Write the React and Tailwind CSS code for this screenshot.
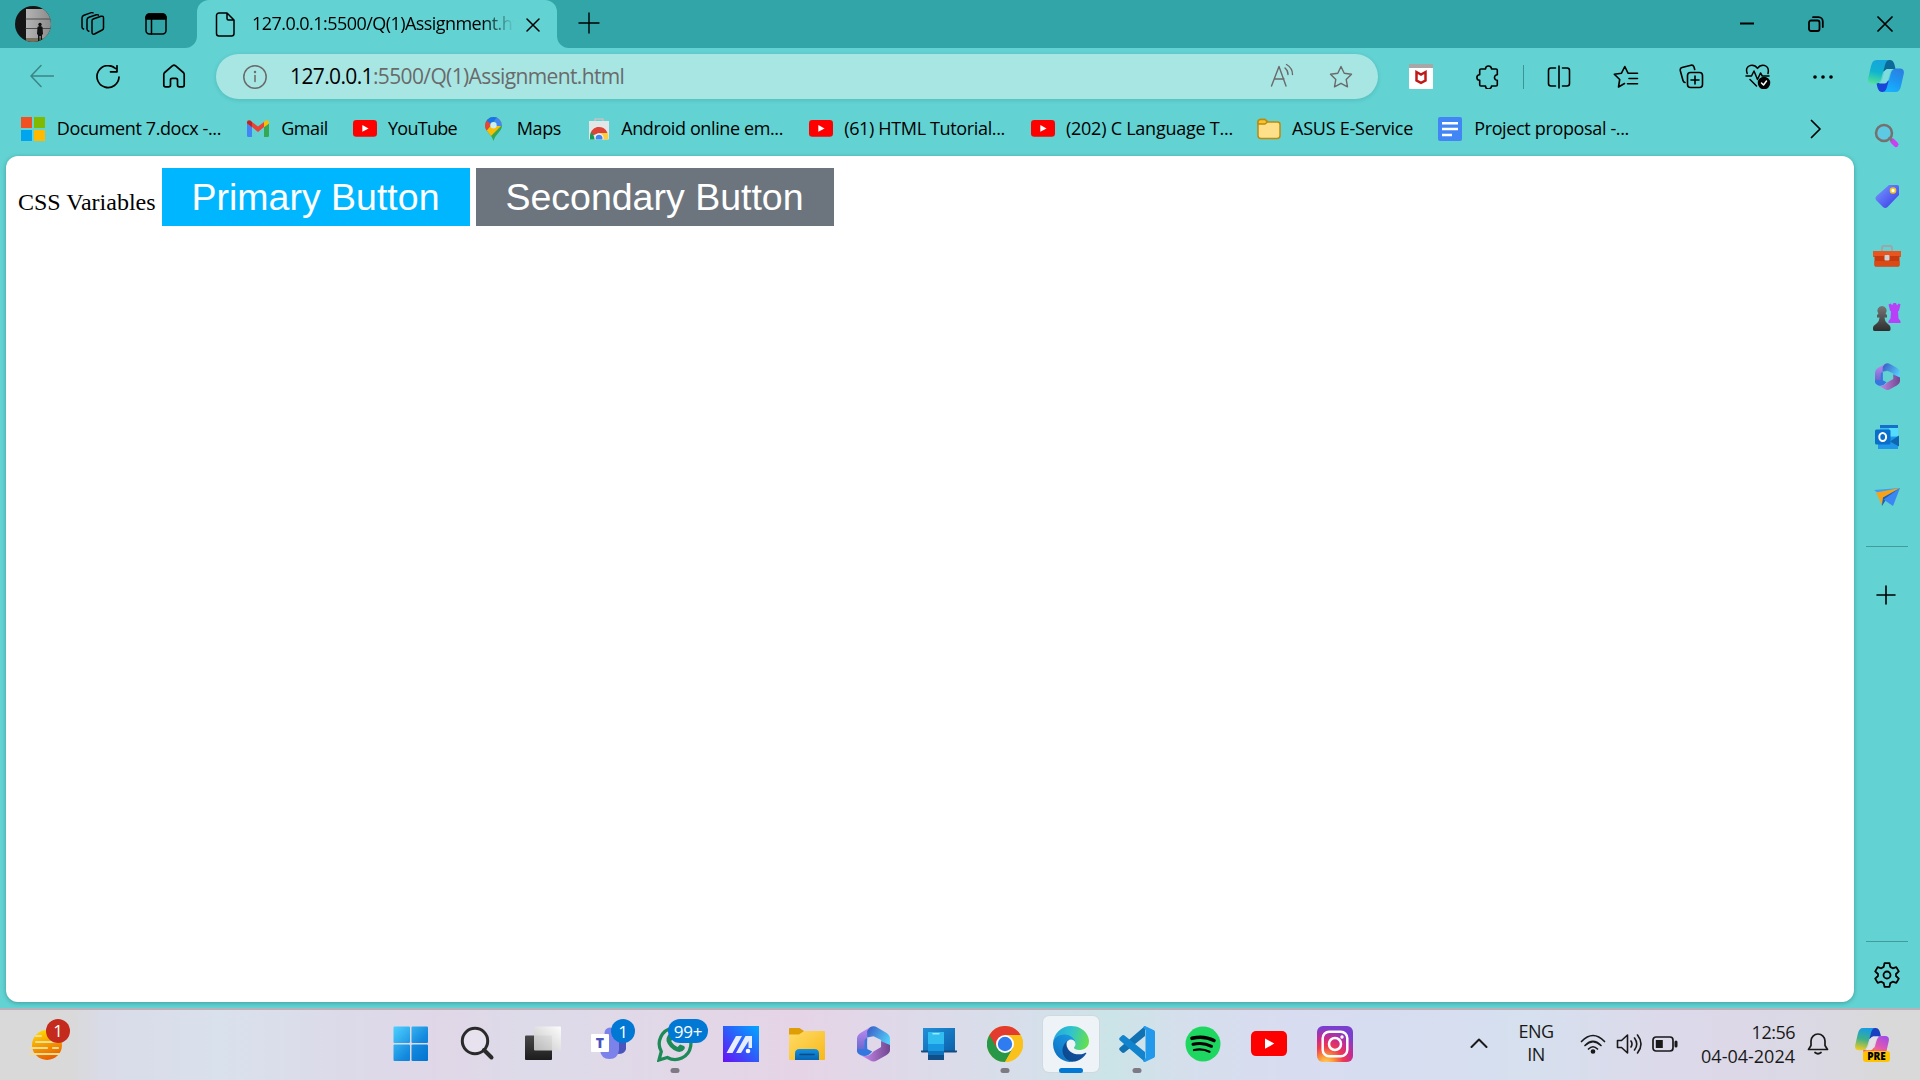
import React from "react";

const UI = "font-['Open_Sans','Noto_Sans',sans-serif]";

function Svg({ w = 24, h, vb, className = "", children, sw = 1.5 }) {
  const hh = h ?? w;
  return (
    <svg
      width={w}
      height={hh}
      viewBox={vb ?? `0 0 ${w} ${hh}`}
      fill="none"
      stroke="currentColor"
      strokeWidth={sw}
      strokeLinecap="round"
      strokeLinejoin="round"
      className={`block shrink-0 ${className}`}
    >
      {children}
    </svg>
  );
}

function Avatar() {
  return (
    <Svg w={36} sw={0}>
      <defs>
        <clipPath id="avatarClip"><circle cx="18" cy="18" r="18" /></clipPath>
        <linearGradient id="wall" x1="0" y1="0" x2="1" y2="0">
          <stop offset="0" stopColor="#b4b4b4" /><stop offset="1" stopColor="#8b8b8b" />
        </linearGradient>
      </defs>
      <g clipPath="url(#avatarClip)">
        <rect width="36" height="36" fill="#141414" />
        <rect x="11" y="3" width="25" height="30" fill="url(#wall)" />
        <path d="M11 13h25M11 22.500h25" stroke="#4c4c4c" strokeWidth="1" />
        <rect x="11" y="32" width="25" height="4" fill="#77705c" />
        <circle cx="25" cy="18.500" r="1.700" fill="#111" />
        <path d="M22.500 21q2.500-2 5 0l.500 7-1 1v6h-1.300v-5h-1.200v5H23v-6l-1-1z" fill="#111" />
      </g>
    </Svg>
  );
}

function YouTube({ w = 24 }) {
  return (
    <Svg w={w} h={w * 0.7} vb="0 0 36 25" sw={0}>
      <rect width="36" height="25" rx="5" fill="#ff0000" />
      <path d="M14 7.300v10.400l9.300-5.200z" fill="#fff" />
    </Svg>
  );
}

function Gmail() {
  return (
    <Svg w={22} h={17} sw={0}>
      <path d="M0 3.500v12A1.500 1.500 0 0 0 1.500 17H5V7z" fill="#4285f4" />
      <path d="M22 3.500v12a1.500 1.500 0 0 1-1.500 1.500H17V7z" fill="#34a853" />
      <path d="M5 7v-5l6 4.600L17 2v5l-6 5z" fill="#ea4335" />
      <path d="M0 3V2.500C0 .4 2.200-.5 3.800.8L5 2v5.300L0 3.600z" fill="#c5221f" />
      <path d="M22 3V2.500C22 .4 19.800-.5 18.200.8L17 2v5.300l5-3.700z" fill="#fbbc04" />
    </Svg>
  );
}

function MapsPin() {
  return (
    <Svg w={17} h={24} sw={0}>
      <defs><clipPath id="pin"><path d="M8.500 0A8.500 8.500 0 0 1 17 8.500c0 6-6.500 8-8.500 15.500C6.500 16.500 0 14.500 0 8.500A8.500 8.500 0 0 1 8.500 0z" /></clipPath></defs>
      <g clipPath="url(#pin)">
        <rect width="17" height="24" fill="#34a853" />
        <path d="M0 15L17-3v11L5 20z" fill="#fbbc04" />
        <path d="M11-1h6v10L8 9z" fill="#4285f4" />
        <path d="M0 0h12L6 8 0 4z" fill="#1a73e8" />
        <path d="M-1 2l5 3.500L6 8l-7 9z" fill="#ea4335" />
      </g>
      <circle cx="8.500" cy="8.300" r="3.200" fill="#cdeeee" />
    </Svg>
  );
}

function WebStore() {
  return (
    <Svg w={22} h={22} sw={0}>
      <path d="M7 4V1h8v3" stroke="#bfc5c8" strokeWidth="1.500" />
      <path d="M1 3h20v17.500a1 1 0 0 1-1 1H2a1 1 0 0 1-1-1z" fill="#e3e6e7" />
      <path d="M2 18.500A9 9 0 0 1 19.500 15H11z" fill="#db4437" />
      <path d="M2 21.500V18a9 9 0 0 1 1.800-4L7.500 21.500z" fill="#0f9d58" />
      <path d="M11 15h8.600a9 9 0 0 1 .4 6.500h-6z" fill="#ffcd40" />
      <path d="M6.500 21.500v-2.300a4.600 4.600 0 0 1 9 0v2.300z" fill="#f1f1f1" />
      <path d="M7.700 21.500v-2a3.400 3.400 0 0 1 6.700 0v2z" fill="#4285f4" />
    </Svg>
  );
}

function MsLogo() {
  return (
    <span className="grid h-6 w-6 shrink-0 grid-cols-2 gap-0.5">
      <i className="bg-[#f25022]" /><i className="bg-[#7fba00]" />
      <i className="bg-[#00a4ef]" /><i className="bg-[#ffb900]" />
    </span>
  );
}

function Folder() {
  return (
    <Svg w={24} h={22}>
      <path d="M1 4a2.500 2.500 0 0 1 2.500-2.500H8L11 4h9.500A2.500 2.500 0 0 1 23 6.500v11a3 3 0 0 1-3 3H4a3 3 0 0 1-3-3z" fill="#ffe08a" stroke="#bd8b0c" />
      <path d="M1 6V4a2.500 2.500 0 0 1 2.500-2.500H8L10.500 4 8 6z" fill="#fac32e" stroke="#bd8b0c" />
    </Svg>
  );
}

function Docs() {
  return (
    <Svg w={24} sw={0}>
      <rect width="24" height="24" rx="2" fill="#4285f4" />
      <path d="M4 6.300h16M4 12h16M4 18h10" stroke="#fff" strokeWidth="2.500" strokeLinecap="butt" />
    </Svg>
  );
}

function Copilot({ w = 36, tone = "blue" }) {
  const blue = tone === "blue";
  const id = `cp-${tone}`;
  return (
    <Svg w={w} h={w * 0.89} vb="0 0 36 32" sw={0}>
      <defs>
        <linearGradient id={`${id}-a`} x1="0.500" y1="0" x2="0.300" y2="1">
          <stop offset="0" stopColor={blue ? "#16a5dc" : "#159ce5"} />
          <stop offset="0.500" stopColor={blue ? "#0fb3cf" : "#3db08c"} />
          <stop offset="1" stopColor={blue ? "#4fe09a" : "#f0cc20"} />
        </linearGradient>
        <linearGradient id={`${id}-b`} x1="0.800" y1="0" x2="0.300" y2="1">
          <stop offset="0" stopColor={blue ? "#2c7fe0" : "#a34be8"} />
          <stop offset="0.500" stopColor={blue ? "#1c96f2" : "#e058b0"} />
          <stop offset="1" stopColor={blue ? "#17b4ff" : "#ff8a64"} />
        </linearGradient>
      </defs>
      <path d="M17 0h5c3 0 4.500 3 5.500 9h-8l-5 3z" fill={blue ? "#0b6a9a" : "#1a3fc0"} />
      <path d="M19 32h-5c-3 0-4.500-3-5.500-9h8l5-3z" fill={blue ? "#1746d8" : "#f5665a"} />
      <path d="M8.500 0H21.500c-3 0-4 3-5 7l-3 10.500c-1 4-2.500 6-6 6H4c-3.500 0-4.500-2.500-3.600-6L3 6C4 2 5.500 0 8.500 0z" fill={`url(#${id}-a)`} />
      <path d="M27.500 32H14.500c3 0 4-3 5-7l3-10.500c1-4 2.500-6 6-6H32c3.500 0 4.500 2.500 3.600 6L33 26c-1 4-2.500 6-5.500 6z" fill={`url(#${id}-b)`} />
      <path d="M19 9h6q-2.500 1.200-3.500 5l-2 7q-.8 2.600-3 2.500h-5.500q2.500-1.200 3.500-5l2-7q.6-2 2.500-2.500z" fill={blue ? "#7fdcdc" : "#e3e0ea"} />
    </Svg>
  );
}

function M365({ w = 26, id = "a" }) {
  return (
    <Svg w={w} h={w * 1.08} vb="0 0 26 28" sw={0}>
      <defs>
        <linearGradient id={`${id}p`} x1="0" y1="0" x2="0" y2="1"><stop stopColor="#c08af0" /><stop offset="1" stopColor="#5560c8" /></linearGradient>
        <linearGradient id={`${id}q`} x1="0" y1="0" x2="1" y2="0.600"><stop stopColor="#3857c4" /><stop offset="1" stopColor="#55d0fa" /></linearGradient>
        <linearGradient id={`${id}r`} x1="0" y1="0" x2="1" y2="0"><stop stopColor="#cc8df0" /><stop offset="1" stopColor="#70468f" /></linearGradient>
      </defs>
      <path d="M10 1.200L3 5.200Q0 7 0 10v9q0 3 3 3.500L8 20V9z" fill={`url(#${id}p)`} />
      <path d="M10 1.200q3-2 6 0l7 4q3 1.800 3 4.800v8l-7-1.500V11L13 8l-5 1V4z" fill={`url(#${id}q)`} />
      <path d="M26 15v4q0 2-3 4l-7 4q-3 2-6 0l-7-4q6 2 10-3l6-3.500V12z" fill={`url(#${id}r)`} />
      <path d="M0 18v1q0 2 3 4 5 2 9-3l-4-2V9L6 11v7z" fill="#3477df" />
      <path d="M13 8.700l4.700 2.800v5.200L13 19.300l-4.700-2.600v-5.200z" fill={id === "s" ? "#62d2d2" : "#e0d8e8"} />
    </Svg>
  );
}

function Bookmark({ icon, label, className }) {
  return (
    <div className={`flex shrink-0 items-center text-lg ${className}`}>
      {icon}
      <span className="mb-0.5 ml-auto whitespace-nowrap">{label}</span>
    </div>
  );
}

function TitleBar() {
  return (
    <header className="flex h-12 bg-[#62d2d2]">
      <div className="flex w-[197px] items-center rounded-br-xl bg-[#31a5a8] pl-[15px]">
        <Avatar />
        <Svg w={26} className="ml-[29px] mt-0.5">
          <path d="M12 8.800q0-1.300 1.200-1.800L21 4.300q2.500-.5 2.500 1.700v10q0 1.500-1.300 2l-7.700 4q-2.500.7-2.500-1.700z" />
          <path d="M18.500 3.200q-.5-.8-2.200-.4L9 5.200Q7 6 7 8v9q0 1.700 1.800 2.300" />
          <path d="M13 .9Q12 .3 10.500.9L4 3.200Q2 4 2 6v9q0 1.500 1.500 2" />
        </Svg>
        <Svg w={22} className="ml-[39px]">
          <rect x="1" y="1" width="20" height="20" rx="3.500" />
          <path d="M1 6V4.500A3.500 3.500 0 0 1 4.500 1h13A3.500 3.500 0 0 1 21 4.500V6z" fill="currentColor" />
          <path d="M6.500 6v15" />
        </Svg>
      </div>
      <div className="w-[360px] bg-[#31a5a8]">
        <div className="flex h-12 items-center rounded-t-xl bg-[#62d2d2] pl-[18px]">
          <Svg w={20} h={25}>
            <path d="M4 1h8l7 7v13.500a2.500 2.500 0 0 1-2.500 2.500H4a2.500 2.500 0 0 1-2.500-2.500v-18A2.500 2.500 0 0 1 4 1zM12 1v5.500A1.500 1.500 0 0 0 13.500 8H19" />
          </Svg>
          <span className="mb-0.5 ml-[17px] w-[262px] overflow-hidden whitespace-nowrap text-lg tracking-[-0.55px] [mask-image:linear-gradient(90deg,#000_88%,transparent)]">127.0.0.1:5500/Q(1)Assignment.html</span>
          <Svg w={14} className="ml-3 mt-px"><path d="M1 1l12 12M13 1L1 13" /></Svg>
        </div>
      </div>
      <div className="flex flex-1 items-center rounded-bl-xl bg-[#31a5a8] pl-[21px] pr-[27px]">
        <Svg w={22} sw={1.4} className="mb-0.5"><path d="M11 1v20M1 11h20" /></Svg>
        <Svg w={16} h={16} sw={2} className="ml-auto"><path d="M1 7.500h14" strokeLinecap="butt" /></Svg>
        <Svg w={16} className="ml-[53px]" sw={1.8}>
          <rect x="1" y="4.500" width="10.500" height="10.500" rx="2" />
          <path d="M5 1.200h5.500A4.300 4.300 0 0 1 14.800 5.500v5.500" />
        </Svg>
        <Svg w={16} className="ml-[53px]" sw={1.7}><path d="M1 1l14 14M15 1L1 15" /></Svg>
      </div>
    </header>
  );
}

const STAR = "M12 1.500l3.200 6.700 7.300 1-5.300 5.200 1.300 7.400L12 18.300l-6.500 3.500 1.300-7.400L1.500 9.200l7.300-1z";

function Toolbar() {
  return (
    <div className="flex h-[57px] items-center pl-[30px] text-black">
      <Svg w={24} className="mb-0.5 text-[#3c8585]"><path d="M23.500 12H1M11 1.500L1 12l10 10.500" /></Svg>
      <Svg w={24} className="ml-[42px]" sw={1.7}><path d="M19.500 3.500A11 11 0 1 0 23 12M21 .8v6h-6.500" /></Svg>
      <Svg w={24} className="mb-0.5 ml-[42px]" sw={1.7}><path d="M1.800 10.500q0-1.200.9-2L10.600 1.700q1.400-1 2.800 0l7.900 6.800q.9.800.9 2V21q0 1.800-1.800 1.800h-3Q15.500 22.800 15.500 21v-5q0-1.700-1.700-1.700h-3.600Q8.500 14.300 8.500 16v5q0 1.800-1.900 1.800h-3Q1.800 22.800 1.800 21z" /></Svg>
      <div className="ml-[30px] flex h-[45px] w-[1162px] items-center rounded-full bg-[#a8e6e4] pl-[27px] pr-[25px] text-[#6a6a6a] shadow-[0_1px_4px_rgba(0,70,70,0.16)]">
        <Svg w={24}><circle cx="12" cy="12" r="11.200" /><path d="M12 10.500v6" /><circle cx="12" cy="7" r=".5" fill="currentColor" /></Svg>
        <span className="ml-[23px] whitespace-nowrap text-[21px] tracking-[-0.63px]"><b className="font-normal text-black">127.0.0.1</b>:5500/Q(1)Assignment.html</span>
        <Svg w={24} h={24} className="mb-1 ml-auto" sw={1.4}><path d="M1.500 23L9 3.500 16 23M4.500 16h9.500M15 5q3 2.500 3 6.500M16.500 1.500q6 3.500 6 10" /></Svg>
        <Svg w={24} className="ml-[35px]" sw={1.4}><path d={STAR} /></Svg>
      </div>
      <Svg w={24} h={25} className="ml-[31px]" sw={0}>
        <rect width="24" height="25" rx="1" fill="#fff" /><rect width="24" height="4" fill="#a7a7a7" />
        <path d="M7.500 8v8.500l4.500 2.300 4.500-2.300V8L12 10.500z" stroke="#c01818" strokeWidth="2.500" strokeLinejoin="miter" />
      </Svg>
      <Svg w={24} className="ml-[43px]" sw={1.6}><path d="M5 4h4.500a3 3 0 0 1 6 0H20q1.300 0 1.300 1.300V9.700a2.800 2.800 0 1 0 0 5.600v4.400q0 1.300-1.300 1.300h-4.500a3 3 0 0 1-6 0H5q-1.300 0-1.300-1.300v-4.400a2.800 2.800 0 0 1 0-5.600V5.300Q3.700 4 5 4z" /></Svg>
      <i className="ml-[23px] h-6 w-px bg-[#3c9494]" />
      <Svg w={24} className="ml-[23px]" sw={1.6}><path d="M12 1v22M8.500 3H4Q1.500 3 1.500 5.500v13Q1.500 21 4 21h4.500M15.500 3H20q2.500 0 2.500 2.500v13Q22.500 21 20 21h-4.500" /></Svg>
      <Svg w={26} h={24} className="ml-[42px]" sw={1.6}><path d="M11.500 18.500l-6 3.500 1.200-7.500L1.300 9.200l7.200-1 3.300-6.700L15 8.200h9.500M16 13.500h8.500M14.500 18.700h10" /></Svg>
      <Svg w={25} className="ml-[40px]" sw={1.6}><rect x="8.500" y="8.500" width="15" height="15" rx="3" /><path d="M16 12v8M12 16h8M6 18.500q-1.600-.4-2-2L1.300 6.700Q.8 4.300 3 3.600L12 1.200q2.200-.4 3 1.800l.7 2.500" /></Svg>
      <Svg w={26} h={25} className="ml-[41px]" sw={1.5}>
        <path d="M2.200 9.500Q0 3 5.500 1.400q4.500-.8 7 3 2.500-3.800 7-3 5 1.600 3.500 8.100M1 12h5.500L9 7l3.500 8.500L15.500 9l1.800 3H24M5 15.500l6.500 6.500" />
        <circle cx="19" cy="19" r="5.500" fill="currentColor" /><path d="M16.500 19l2 2 3-4" stroke="#fff" />
      </Svg>
      <Svg w={22} h={6} className="ml-[41px]" sw={0}><circle cx="3" cy="3" r="1.800" fill="#000" /><circle cx="11" cy="3" r="1.800" fill="#000" /><circle cx="19" cy="3" r="1.800" fill="#000" /></Svg>
      <span className="ml-[34px]"><Copilot /></span>
    </div>
  );
}

function BookmarksBar() {
  return (
    <nav className="flex h-[51px] items-center pb-1 pl-[21px] text-black">
      <Bookmark className="w-[200px] tracking-[-0.39px]" icon={<MsLogo />} label="Document 7.docx -..." />
      <Bookmark className="ml-[26px] w-[81px] tracking-[-0.4px]" icon={<Gmail />} label="Gmail" />
      <Bookmark className="ml-[25px] w-[104px] tracking-[-0.7px]" icon={<YouTube />} label="YouTube" />
      <Bookmark className="ml-7 w-[76px] tracking-[-0.4px]" icon={<MapsPin />} label="Maps" />
      <Bookmark className="ml-[27px] w-[195px] tracking-[-0.39px]" icon={<WebStore />} label="Android online em..." />
      <Bookmark className="ml-[26px] w-[196px] tracking-[-0.35px]" icon={<YouTube />} label="(61) HTML Tutorial..." />
      <Bookmark className="ml-[26px] w-[202px] tracking-[-0.24px]" icon={<YouTube />} label="(202) C Language T..." />
      <Bookmark className="ml-6 w-[156px] tracking-[-0.24px]" icon={<Folder />} label="ASUS E-Service" />
      <Bookmark className="ml-[25px] w-[191px] tracking-[-0.35px]" icon={<Docs />} label="Project proposal -..." />
      <Svg w={12} h={20} className="ml-[181px]" sw={1.7}><path d="M1.500 1.500L10 10l-8.500 8.500" /></Svg>
    </nav>
  );
}

const SIDE = [
  <Svg key="s" w={26} sw={0}>
    <defs><linearGradient id="hd" x1="0" y1="0" x2="1" y2="1"><stop stopColor="#e64df5" /><stop offset="1" stopColor="#a832f0" /></linearGradient></defs>
    <circle cx="10" cy="10" r="8" fill="#5ec9e2" stroke="#76716f" strokeWidth="2.500" />
    <path d="M18.500 18l3.500 3.500" stroke="#cc40f3" strokeWidth="5" /><path d="M15.500 15l2 2" stroke="#777" strokeWidth="2.500" />
  </Svg>,
  <Svg key="t" w={26} sw={0}>
    <defs><linearGradient id="tg" x1="0" y1="0" x2="1" y2="1"><stop stopColor="#7b9dff" /><stop offset="1" stopColor="#3535e6" /></linearGradient></defs>
    <path d="M15 2h8q2 0 2 2v8L13.500 24q-2.500 2-4.500 0l-6.500-6.500q-2-2 0-4.500z" fill="url(#tg)" />
    <circle cx="19" cy="7.500" r="2.500" fill="#fff" stroke="#f5c51c" strokeWidth="1.600" />
  </Svg>,
  <Svg key="b" w={28} h={22} sw={0}>
    <path d="M9 6V3q0-2 2-2h6q2 0 2 2v3" stroke="#9ba7aa" strokeWidth="2" />
    <path d="M0 6h28v6H0z" fill="#e8551e" /><path d="M1.500 11h25v9q0 1.500-1.500 1.500H3q-1.500 0-1.500-1.500z" fill="#c63a0d" />
    <path d="M1.500 16h25v4q0 1.500-1.500 1.500H3q-1.500 0-1.500-1.500z" fill="#d94a17" /><rect x="11.500" y="10" width="5" height="5.500" rx="1" fill="#ccd2d5" />
  </Svg>,
  <Svg key="c" w={28} h={28} sw={0}>
    <defs><linearGradient id="pw" x1="0" y1="0" x2="0" y2="1"><stop stopColor="#777" /><stop offset="1" stopColor="#2d2d2d" /></linearGradient></defs>
    <path d="M15.500 1.500L18 .5l1 2L20.500 0h2.500l1 2.500L25.500.5l2 1-1.500 6-1 1 .5 7 2 2.500V20H15.500v-2l2-2.500.5-7-1-1z" fill="#b840f8" />
    <path d="M9 3a4.700 4.700 0 0 1 3.600 7.700L14 12v2.500h-2.500q.5 4.500 3.500 6.500 2.500 1.500 2.500 3.500v2q0 1.500-2 1.500H2q-2 0-2-1.500v-2Q0 22.500 3 21q3-2 3.500-6.500H4V12l1.400-1.300A4.700 4.700 0 0 1 9 3z" fill="url(#pw)" />
  </Svg>,
  <M365 key="m" w={25} id="s" />,
  <Svg key="o" w={24} sw={0}>
    <path d="M5 0h18v13H5z" fill="#38bdf5" /><path d="M5 0h18v3H5z" fill="#1470c8" /><path d="M14 3h9v8h-9z" fill="#53dcff" />
    <path d="M3 12h20v12H3z" fill="#1f97e8" /><path d="M15 16.500l9 5V10.500z" fill="#1065b0" />
    <rect y="4.500" width="15.500" height="15" rx="1.500" fill="#0a6fcb" /><ellipse cx="7.700" cy="12" rx="3.400" ry="4" stroke="#fff" strokeWidth="2" />
  </Svg>,
  <Svg key="p" w={27} h={20} sw={0}>
    <path d="M0 3L26 1 12 12z" fill="#3d9cf4" /><path d="M7 9l19-8-13 10-5 8z" fill="#155fb8" /><path d="M2 5.500L26 1 9 10.500 8 18z" fill="#f5a31a" />
    <path d="M26 1L9.500 12.500 19 19z" fill="#3a86f2" />
  </Svg>,
];

function Sidebar() {
  return (
    <aside className="flex w-[66px] flex-col items-center">
      <div className="flex h-[421px] flex-col">
        {SIDE.map((icon, i) => (
          <div key={i} className="flex h-[60.200px] shrink-0 items-center justify-center pb-1">{icon}</div>
        ))}
      </div>
      <i className="mt-[17px] h-px w-[42px] shrink-0 bg-[#429c9e]" />
      <Svg w={20} className="mr-0.5 mt-[38px]" sw={1.6}><path d="M10 1v18M1 10h18" /></Svg>
      <i className="mt-auto h-px w-[42px] shrink-0 bg-[#429c9e]" />
      <Svg w={26} className="mb-[20px] mt-[20px]" sw={1.800}>
        <path d="M10.500 1.200h5l.8 3.700 2.400 1.400 3.600-1.200 2.500 4.300L22 12v2l2.800 2.600-2.500 4.300-3.600-1.200-2.400 1.400-.8 3.700h-5l-.8-3.700-2.400-1.400-3.600 1.200-2.500-4.300L4 14v-2L1.200 9.400l2.500-4.300 3.600 1.200 2.400-1.400z" />
        <circle cx="13" cy="13" r="3.500" />
      </Svg>
    </aside>
  );
}

function Page() {
  return (
    <main className="h-[846px] w-[1848px] rounded-xl bg-white pl-3 pt-3 text-black shadow-[0_1px_4px_rgba(0,60,60,0.35)]">
      <div className="flex items-baseline gap-1.5">
        <span className="w-[138px] whitespace-nowrap font-['Liberation_Serif',serif] text-2xl">CSS Variables</span>
        <button className="h-[58px] w-[308px] whitespace-nowrap bg-[#00b7ff] pr-px font-['Liberation_Sans',sans-serif] text-[37.500px] leading-[58px] text-white">Primary Button</button>
        <button className="h-[58px] w-[358px] whitespace-nowrap bg-[#6c757d] pr-px font-['Liberation_Sans',sans-serif] text-[37.500px] leading-[58px] text-white">Secondary Button</button>
      </div>
    </main>
  );
}

function Weather() {
  return (
    <Svg w={34} h={34} sw={0}>
      <defs><linearGradient id="sun" x1="0.300" y1="0" x2="0.600" y2="1"><stop stopColor="#ffd800" /><stop offset="1" stopColor="#e85a00" /></linearGradient></defs>
      <circle cx="18" cy="17" r="15" fill="url(#sun)" />
      <path d="M7 8h5M7 14h22M1 20h17M24 20h5M1 26h29" stroke="#f3dc95" strokeWidth="2.200" />
    </Svg>
  );
}

const APPS = {
  start: (
    <Svg w={36} sw={0}>
      <defs><linearGradient id="win" x1="0" y1="0" x2="36" y2="36" gradientUnits="userSpaceOnUse"><stop stopColor="#4fd2ff" /><stop offset="0.600" stopColor="#1388dd" /><stop offset="1" stopColor="#0072cf" /></linearGradient></defs>
      <g fill="url(#win)"><rect x=".5" y=".5" width="16.500" height="16.500" rx="1" /><rect x="18.500" y=".5" width="16.500" height="16.500" rx="1" /><rect x=".5" y="18.500" width="16.500" height="16.500" rx="1" /><rect x="18.500" y="18.500" width="16.500" height="16.500" rx="1" /></g>
    </Svg>
  ),
  search: <Svg w={36} className="text-[#2a2a2a]"><circle cx="16" cy="15" r="12.700" strokeWidth="3" fill="#ffffff44" /><path d="M25 24l7.500 7.500" strokeWidth="4" /></Svg>,
  task: (
    <Svg w={36} sw={0}>
      <defs><linearGradient id="tvd" x1="0" y1="0" x2="0" y2="1"><stop stopColor="#484848" /><stop offset="1" stopColor="#1c1c1c" /></linearGradient><linearGradient id="tvl" x1="1" y1="0" x2="0" y2="1"><stop stopColor="#fff" /><stop offset="1" stopColor="#c4c4c4" /></linearGradient></defs>
      <rect y="9.500" width="27" height="24.500" rx="1" fill="url(#tvd)" /><rect x="9" y=".5" width="27" height="24" rx="1" fill="url(#tvl)" opacity=".93" />
    </Svg>
  ),
  teams: (
    <Svg w={36} sw={0}>
      <circle cx="19" cy="7" r="5.500" fill="#7b83eb" /><path d="M24 12h11v11q-1 5-8 5z" fill="#4b53bc" /><path d="M9 12h19v12q-1 9-9.500 9T9 24z" fill="#7b83eb" />
      <rect y="8" width="18" height="18" rx="1" fill="#fff" />
      <text x="9" y="22" textAnchor="middle" fontFamily="Open Sans" fontWeight="800" fontSize="14" fill="#4b53bc">T</text>
    </Svg>
  ),
  whatsapp: (
    <Svg w={36} sw={0}>
      <path d="M2 34l2.300-8.500a15.800 15.800 0 1 1 6 6z" stroke="#1d8b58" strokeWidth="3.300" strokeLinejoin="miter" />
      <path d="M11 9q2-2 3.500 0l1.500 3.500-1.800 2.500q2.500 4.500 6.500 6l2.300-2.500 4 1.500q1.500 1 .5 3-2.500 4-7.500 2.500Q12 22.500 9.500 15 9 12 11 9z" fill="#1d8b58" />
    </Svg>
  ),
  asus: (
    <Svg w={36} sw={0}>
      <defs><linearGradient id="as" x1="0" y1="1" x2="1" y2="0"><stop stopColor="#6a10f5" /><stop offset="0.500" stopColor="#2e5cfa" /><stop offset="1" stopColor="#00a8ff" /></linearGradient></defs>
      <rect width="36" height="36" fill="url(#as)" /><path d="M3.500 27L13 10h6L9.500 27zM13 27l9.500-17H29v12h-3.500v-7L18 27z" fill="#e5edff" /><circle cx="25" cy="25" r="2.300" fill="#fff" />
    </Svg>
  ),
  files: (
    <Svg w={36} sw={0}>
      <defs><linearGradient id="fo" x1="0" y1="0" x2="1" y2="1"><stop stopColor="#ffdc68" /><stop offset="1" stopColor="#f8b818" /></linearGradient><linearGradient id="fb" x1="0" y1="0" x2="0" y2="1"><stop stopColor="#1590df" /><stop offset="1" stopColor="#0565b5" /></linearGradient></defs>
      <path d="M0 3q0-1 1-1h9.500L15 5v4H0z" fill="#df9e05" /><path d="M0 8.500h10L15 5h20q1 0 1 1v27q0 1-1 1H1q-1 0-1-1z" fill="url(#fo)" />
      <path d="M6 34v-6.500q0-4.500 4.500-4.500h15q4.500 0 4.500 4.500V34z" fill="url(#fb)" /><path d="M11 28.500h14" stroke="#064a86" strokeWidth="1.500" />
    </Svg>
  ),
  m365: <M365 w={33} id="t" />,
  phone: (
    <Svg w={36} sw={0}>
      <defs><linearGradient id="lp" x1="0" y1="0" x2="1" y2="1"><stop stopColor="#2090d8" /><stop offset="1" stopColor="#0b60aa" /></linearGradient></defs>
      <rect x="2" y="2" width="32" height="24" fill="url(#lp)" /><path d="M0 24.500h36v1q0 1-1 1H1q-1 0-1-1z" fill="#134c82" />
      <path d="M7 6h16v13H7z" fill="#32bdf1" /><path d="M7 18h16v8H7z" fill="#1998e2" /><path d="M7 25h16v5H7z" fill="#0f72bd" /><path d="M7 29h16v5H7z" fill="#124e88" /><path d="M12 7.800h6" stroke="#9ae6fc" strokeWidth="1.500" />
    </Svg>
  ),
  chrome: (
    <Svg w={36} sw={0}>
      <circle cx="18" cy="18" r="18" fill="#fbc11b" />
      <path d="M2.400 9A18 18 0 0 0 18 36l7.800-13.500L18 18z" fill="#279847" />
      <path d="M18 18L10.200 22.500 2.400 9A18 18 0 0 1 33.600 9H18z" fill="#e33b2e" />
      <path d="M18 9h15.600A18 18 0 0 1 18 36l7.800-13.500z" fill="#fbc11b" />
      <circle cx="18" cy="18" r="9" fill="#fff" /><circle cx="18" cy="18" r="7.200" fill="#2f7cf0" />
    </Svg>
  ),
  edge: (
    <Svg w={36} sw={0} vb="0 0 256 256">
      <defs>
        <linearGradient id="e1" x1="0.100" y1="0.800" x2="1" y2="0.200"><stop stopColor="#0c4a8e" /><stop offset="1" stopColor="#1353a8" /></linearGradient>
        <linearGradient id="e2" x1="0.900" y1="0" x2="0.100" y2="1"><stop stopColor="#1b9de2" /><stop offset="0.600" stopColor="#1382d2" /><stop offset="1" stopColor="#0f68b5" /></linearGradient>
        <linearGradient id="e3" x1="0" y1="0.400" x2="1" y2="0.600"><stop stopColor="#22a7dc" /><stop offset="0.450" stopColor="#2fc3d0" /><stop offset="1" stopColor="#66e14a" /></linearGradient>
      </defs>
      <path d="M231 190.500c-3.400 1.800-6.900 3.400-10.500 4.700a101.600 101.600 0 0 1-35.900 6.500c-47.300 0-88.500-32.500-88.500-74.300.1-11.500 6.400-21.900 16.400-27.300-42.800 1.800-53.800 46.400-53.800 72.500 0 74 68.100 81.400 82.800 81.400 7.900 0 19.800-2.300 27-4.600l1.300-.4a128 128 0 0 0 66.600-52.800 4 4 0 0 0-5.400-5.700z" fill="url(#e1)" />
      <path d="M105.700 241.400a79.200 79.200 0 0 1-22.700-21.300 80.700 80.700 0 0 1 29.500-120c3.200-1.500 8.500-4.100 15.600-4a32.400 32.400 0 0 1 25.700 13 31.900 31.900 0 0 1 6.300 18.700c0-.2 24.500-79.600-80-79.600C36.200 48.200.1 89.900.1 126.500a130.300 130.300 0 0 0 12.100 56 128 128 0 0 0 156.400 67.100 75.500 75.500 0 0 1-62.800-8z" fill="url(#e2)" />
      <path d="M152.300 148.900c-.9 1-3.400 2.500-3.400 5.600 0 2.600 1.700 5.200 4.800 7.300 14.300 10 41.400 8.600 41.500 8.600 10.700 0 21.100-2.900 30.300-8.300a61.400 61.400 0 0 0 30.400-52.900c.3-22.400-8-37.300-11.300-43.900C223.500 23.900 177.700 0 128 0A128 128 0 0 0 0 126.200c.5-36.500 36.800-66 80-66 3.500 0 23.500.3 42 10.100 16.300 8.600 24.900 18.900 30.800 29.200 6.200 10.700 7.300 24.100 7.300 29.500 0 5.300-2.700 13.300-7.800 19.900z" fill="url(#e3)" />
    </Svg>
  ),
  code: (
    <Svg w={36} sw={0}>
      <path d="M26 0v10L5.500 26.500Q4 27.500 2.500 26L.7 24.300Q-.5 23 1 21.500z" fill="#1071b3" /><path d="M26 36V26L5.500 9.500Q4 8.500 2.500 10L.7 11.700Q-.5 13 1 14.500z" fill="#1184cd" /><path d="M26 0l9 4.200q1 .5 1 2v23.600q0 1.500-1 2L26 36q-2 0-2-1.500l2.500-2.500V4L24 1.500Q24.500.3 26 0z" fill="#2399ec" />
    </Svg>
  ),
  spotify: (
    <Svg w={36} sw={0}><circle cx="18" cy="18" r="17.500" fill="#1ed760" /><path d="M7 12.300q12-3 22 2.200" stroke="#000" strokeWidth="3.600" /><path d="M8 18.300q10-2.500 18.500 2" stroke="#000" strokeWidth="3" /><path d="M9 24q8.500-2 15.500 1.800" stroke="#000" strokeWidth="2.300" /></Svg>
  ),
  youtube: <YouTube w={36} />,
  insta: (
    <Svg w={36} sw={0}>
      <defs><radialGradient id="ig" cx="0.250" cy="1.050" r="1"><stop stopColor="#ffd567" /><stop offset="0.200" stopColor="#fba33a" /><stop offset="0.480" stopColor="#ef3a4f" /><stop offset="0.700" stopColor="#cf2a86" /><stop offset="1" stopColor="#7b3fd0" /></radialGradient></defs>
      <rect width="36" height="36" rx="6" fill="url(#ig)" /><rect x="5.700" y="5.700" width="24.600" height="24.600" rx="6.500" stroke="#fff" strokeWidth="2.500" /><circle cx="18" cy="18" r="6" stroke="#fff" strokeWidth="2.500" /><circle cx="25" cy="11" r="1.700" fill="#fff" />
    </Svg>
  ),
};

const ORDER = ["start", "search", "task", "teams", "whatsapp", "asus", "files", "m365", "phone", "chrome", "edge", "code", "spotify", "youtube", "insta"];

function TaskApp({ name }) {
  const active = name === "edge";
  const running = ["whatsapp", "chrome", "code"].includes(name);
  return (
    <div className={`relative flex h-14 w-14 shrink-0 items-center justify-center rounded-md ${active ? "bg-[#edf3f7] shadow-[0_0_0_1px_#d0dade]" : ""}`}>
      {APPS[name]}
      {running && <i className="absolute bottom-[-1px] left-1/2 h-[5px] w-[9px] -translate-x-1/2 rounded-full bg-[#7d7a84]" />}
      {active && <i className="absolute bottom-[-1px] left-4 h-[5px] w-6 rounded-full bg-[#0078d4]" />}
      {name === "teams" && <span className="absolute left-[30px] top-[3px] flex h-6 w-6 items-center justify-center rounded-full bg-[#0078d4] text-[17px] leading-none text-white">1</span>}
      {name === "whatsapp" && <span className="absolute left-[21px] top-[3px] flex h-6 w-10 items-center justify-center rounded-full bg-[#0078d4] text-[17px] leading-none tracking-[-0.3px] text-white">99+</span>}
    </div>
  );
}

function Taskbar() {
  return (
    <footer className="flex h-[72px] items-center border-t-2 border-[#b5b2ba] bg-[linear-gradient(90deg,#d9d9d9_0,#d9d9d9_70px,#d9dbe8_105px,#d9e1ec_220px,#dcdae9_345px,#e0d7e7_450px,#dddbe9_530px,#e5d4e6_800px,#dddae9_920px,#d6dfeb_1030px,#cbe4e7_1110px,#d5dfec_1180px,#d8dcf0_1290px,#d6def0_1450px,#d6e0ee_1530px,#dcd9ea_1670px,#dcd8e8_1740px,#dad9e2_1830px,#d9d9d9_1885px)] text-[#191919]">
      <div className="relative ml-[29px] mt-[-1px] w-[354px]">
        <Weather />
        <span className="absolute left-[17px] top-[-9px] flex h-6 w-6 items-center justify-center rounded-full bg-[#c42b1c] text-[17px] leading-none text-white">1</span>
      </div>
      <div className="mt-[-2px] flex gap-2.5">{ORDER.map((n) => <TaskApp key={n} name={n} />)}</div>
      <Svg w={18} h={10} className="mb-1 ml-[107px] shrink-0" sw={2}><path d="M1.500 9L9 1.500 16.500 9" /></Svg>
      <div className="mb-1 ml-[28px] w-10 text-center text-lg leading-[23px] tracking-[-0.5px]">ENG<br />IN</div>
      <Svg w={26} h={20} className="mb-0.5 ml-[24px]" sw={1.700}><path d="M1.500 7.500q11.500-12 23 0M5 11.500q8-8 16 0M8.500 15q4.500-4.500 9 0" /><circle cx="13" cy="17.500" r="1.500" fill="currentColor" /></Svg>
      <Svg w={26} h={22} className="mb-0.5 ml-[10px]" sw={1.600}><path d="M1.500 7.500h4l6-5.500v18l-6-5.500h-4zM15 8q2 3 0 6M18.500 5q4.500 6 0 12M21.500 2q7 9 0 18" /></Svg>
      <Svg w={26} h={16} className="mb-0.5 ml-[10px]" sw={1.700}><rect x="1" y="1" width="20" height="14" rx="3" /><rect x="3.800" y="4" width="7" height="8" fill="currentColor" strokeWidth="0" /><path d="M24 6v4" strokeWidth="3" /></Svg>
      <div className="mb-[3px] ml-[18px] w-[99px] whitespace-nowrap text-right text-lg leading-6"><div className="tracking-[-0.5px]">12:56</div><div>04-04-2024</div></div>
      <Svg w={22} h={23} className="mb-[3px] ml-[12px]" sw={1.700}><path d="M1.500 17.500l2.500-4V9a7 7 0 0 1 14 0v4.500l2.500 4zM8 20.500q3 2.500 6 0" /></Svg>
      <div className="relative ml-[26px] mb-1">
        <Copilot w={34} tone="rainbow" />
        <span className="absolute left-[8px] top-[23px] flex h-[11px] w-[27px] items-center justify-center rounded-[3px] bg-[#ffc400] text-[10px] font-extrabold leading-none text-black">PRE</span>
      </div>
    </footer>
  );
}

export default function App() {
  return (
    <div className={`flex h-[1080px] w-[1920px] flex-col overflow-hidden bg-[#62d2d2] text-black ${UI}`}>
      <TitleBar />
      <div className="flex h-[108px] flex-col">
        <Toolbar />
        <BookmarksBar />
      </div>
      <div className="flex h-[852px] pl-1.5">
        <Page />
        <div className="-mt-12 flex h-[900px]"><Sidebar /></div>
      </div>
      <Taskbar />
    </div>
  );
}
